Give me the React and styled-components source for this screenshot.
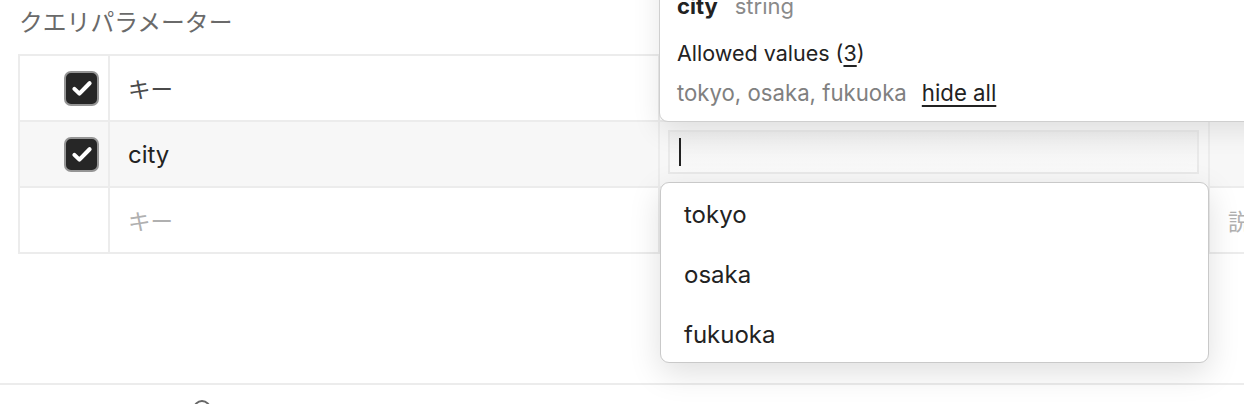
import React from "react";
import styled, { createGlobalStyle } from "styled-components";

const GlobalStyle = createGlobalStyle`
  html, body {
    margin: 0;
    padding: 0;
    background: #fff;
    overflow: hidden;
  }
  body {
    font-family: Inter, "Noto Sans CJK JP", sans-serif;
    color: #222;
  }
`;

const Page = styled.div`
  position: relative;
  width: 1244px;
  height: 404px;
  overflow: hidden;
`;

const Section = styled.div`
  padding: 5px 0 0 18px;
`;

const Title = styled.h3`
  margin: 0 0 0 1px;
  height: 32px;
  line-height: 32px;
  font-size: 23.8px;
  font-weight: 400;
  color: #6a6a6a;
  font-family: "Noto Sans CJK JP", sans-serif;
`;

const Table = styled.div`
  margin-top: 17px;
  width: 1300px;
  display: grid;
  grid-template-columns: 90px 550px 550px 1fr;
  border-top: 2px solid #ececec;
  border-left: 2px solid #ececec;
`;

const Cell = styled.div`
  position: relative;
  height: 66px;
  display: flex;
  align-items: center;
  border-right: 2px solid #ececec;
  border-bottom: 2px solid #ececec;
  background: ${(p) => (p.$active ? "#f7f7f7" : "#fff")};
  justify-content: ${(p) => (p.$right ? "flex-end" : "flex-start")};
  padding: ${(p) => (p.$right ? "0 9px 0 0" : p.$pad ? "0 0 0 18px" : "0")};
  box-sizing: border-box;
`;

const Check = styled.span`
  width: 35px;
  height: 35px;
  box-sizing: border-box;
  border: 2px solid #959595;
  border-radius: 7px;
  background: #262626;
  display: flex;
  align-items: center;
  justify-content: center;
`;

const KeyText = styled.span`
  color: ${(p) => (p.$placeholder ? "#b0b0b0" : p.$jp ? "#4a4a4a" : "#222")};
  font-family: ${(p) =>
    p.$jp ? `"Noto Sans CJK JP", sans-serif` : `Inter, sans-serif`};
  font-size: ${(p) => (p.$jp ? "22.5px" : "24px")};
`;

const Input = styled.div`
  align-self: flex-start;
  margin: 8px 9px 0 8px;
  flex: 1;
  height: 44px;
  box-sizing: border-box;
  border: 2px solid #e9e9e9;
  background: linear-gradient(#efefef, #fafafa);
  display: flex;
  align-items: center;
  padding-left: 9px;
`;

const Caret = styled.span`
  width: 2px;
  height: 28px;
  background: #222;
`;

const Popover = styled.div`
  position: absolute;
  left: 659px;
  top: -45px;
  width: 640px;
  box-sizing: border-box;
  background: #fff;
  border: 1px solid #cfcfcf;
  border-radius: 9px;
  box-shadow: 0 8px 28px rgba(0, 0, 0, 0.1);
  padding: 30px 17px 8px 17px;
  font-family: Inter, sans-serif;
  z-index: 3;
`;

const PopLine = styled.div`
  height: 40px;
  line-height: 40px;
  font-size: ${(p) => p.$size || "21.5px"};
  color: ${(p) => p.$color || "#222"};
  white-space: nowrap;
  margin-bottom: ${(p) => (p.$head ? "7px" : "0")};
`;

const Bold = styled.span`
  font-weight: 700;
  color: #222;
  margin-right: 17px;
`;

const Muted = styled.span`
  color: #8a8a8a;
`;

const Link = styled.span`
  text-decoration: underline;
  text-underline-offset: 4px;
  color: ${(p) => p.$color || "#222"};
  margin-left: ${(p) => p.$gap || 0};
`;

const Dropdown = styled.div`
  position: absolute;
  left: 660px;
  top: 182px;
  width: 549px;
  height: 181px;
  box-sizing: border-box;
  background: #fff;
  border: 1px solid #c9c9c9;
  border-radius: 9px;
  box-shadow: 0 10px 32px rgba(0, 0, 0, 0.13);
  padding: 1px 0;
  font-family: Inter, sans-serif;
  z-index: 3;
`;

const Option = styled.div`
  height: 60px;
  display: flex;
  align-items: center;
  padding-left: 23px;
  font-size: 24px;
  color: #222;
`;

const Footer = styled.div`
  position: absolute;
  left: 0;
  right: 0;
  top: 383px;
  height: 2px;
  background: #ececec;
`;

const FooterIcon = styled.span`
  position: absolute;
  left: 193px;
  top: 400px;
  width: 18px;
  height: 18px;
  border-radius: 50%;
  border: 2px solid #666;
  box-sizing: border-box;
`;

const CheckBox = () => (
  <Check>
    <svg width="26" height="26" viewBox="0 0 24 24">
      <path
        d="M5 12.8l4.6 4.4L19 7.6"
        fill="none"
        stroke="#fff"
        strokeWidth="3.8"
        strokeLinecap="round"
        strokeLinejoin="round"
      />
    </svg>
  </Check>
);

const options = ["tokyo", "osaka", "fukuoka"];

export default function App() {
  return (
    <Page>
      <GlobalStyle />
      <Section>
        <Title>クエリパラメーター</Title>
        <Table>
          <Cell $right>
            <CheckBox />
          </Cell>
          <Cell $pad>
            <KeyText $jp>キー</KeyText>
          </Cell>
          <Cell />
          <Cell />

          <Cell $right $active>
            <CheckBox />
          </Cell>
          <Cell $pad $active>
            <KeyText>city</KeyText>
          </Cell>
          <Cell $active>
            <Input>
              <Caret />
            </Input>
          </Cell>
          <Cell $active />

          <Cell />
          <Cell $pad>
            <KeyText $jp $placeholder>
              キー
            </KeyText>
          </Cell>
          <Cell />
          <Cell $pad>
            <KeyText $jp $placeholder>
              説明
            </KeyText>
          </Cell>
        </Table>
      </Section>

      <Popover>
        <PopLine $head $size="22px">
          <Bold>city</Bold>
          <Muted>string</Muted>
        </PopLine>
        <PopLine>
          Allowed values (<Link>3</Link>)
        </PopLine>
        <PopLine $color="#808080" $size="22.2px">
          tokyo, osaka, fukuoka
          <Link $gap="15px">hide all</Link>
        </PopLine>
      </Popover>

      <Dropdown>
        {options.map((o) => (
          <Option key={o}>{o}</Option>
        ))}
      </Dropdown>

      <Footer />
      <FooterIcon />
    </Page>
  );
}
